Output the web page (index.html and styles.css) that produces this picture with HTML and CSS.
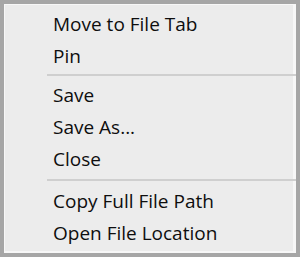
FILE: index.html
```html
<!DOCTYPE html>
<html>
<head>
<meta charset="utf-8">
<link rel="stylesheet" href="styles.css">
</head>
<body>
<div class="menu">
  <div class="inner">
    <div class="item">Move to File Tab</div>
    <div class="item">Pin</div>
    <div class="sep sep-first"></div>
    <div class="item">Save</div>
    <div class="item">Save As...</div>
    <div class="item">Close</div>
    <div class="sep sep-second"></div>
    <div class="item">Copy Full File Path</div>
    <div class="item">Open File Location</div>
  </div>
</div>
</body>
</html>
```
FILE: styles.css
```css
html, body {
  margin: 0;
  padding: 0;
  background: #ffffff;
}
.menu {
  width: 300px;
  height: 257px;
  box-sizing: border-box;
  border: 4px solid #a6a6a6;
  background: #ececec;
}
.inner {
  height: 100%;
  box-sizing: border-box;
  border-style: solid;
  border-color: #f7f7f7;
  border-width: 1px 3px 2px 1px;
  background: #ececec;
  padding: 3px 0 0 0;
  display: flex;
  flex-direction: column;
}
.item {
  flex: none;
  height: 32px;
  line-height: 32px;
  padding-left: 48px;
  font-family: "Open Sans", sans-serif;
  font-size: 19px;
  color: #0e0e0e;
  white-space: nowrap;
}
.sep {
  flex: none;
  height: 2px;
  margin: 3px -3px 3px 42px;
  background: #cfcfcf;
}
.sep-first {
  margin-top: 2px;
}
.sep-second {
  margin-top: 4px;
  margin-bottom: 4px;
}
```
